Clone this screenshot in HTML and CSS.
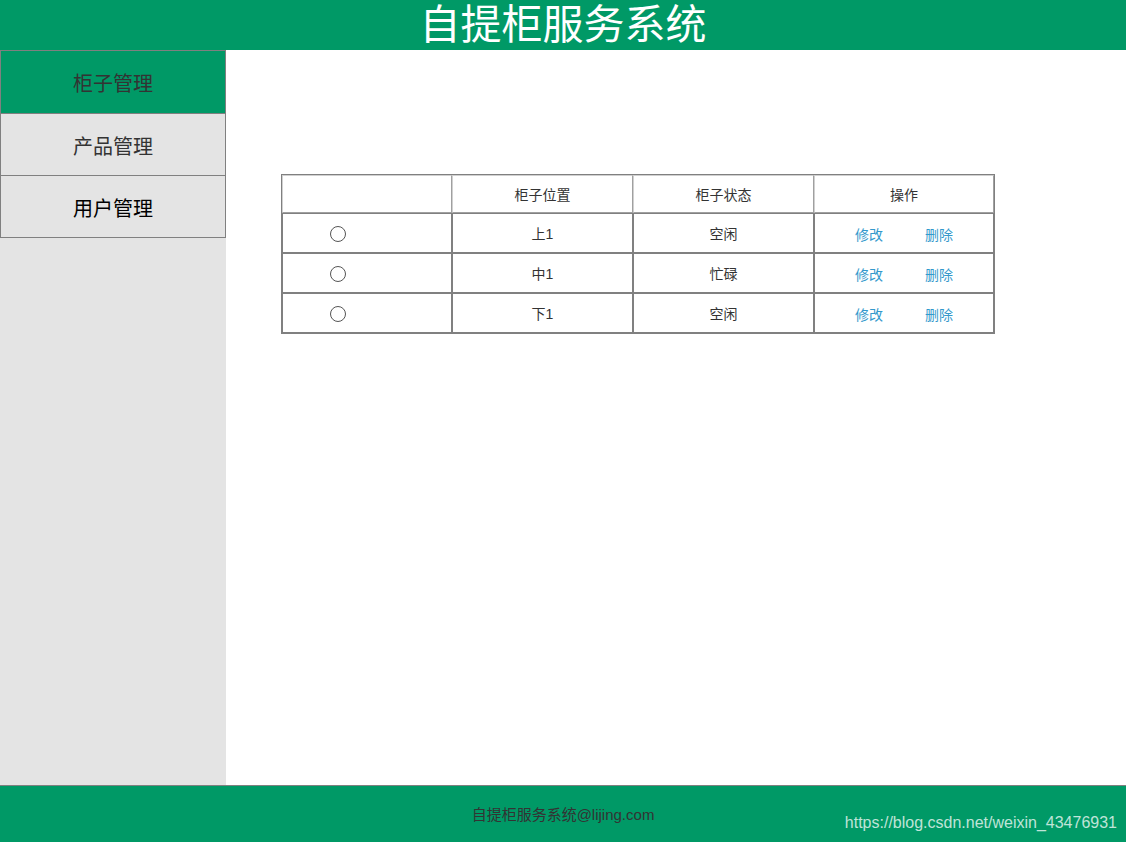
FILE: index.html
```html
<!DOCTYPE html>
<html>

<head>
    <title>自提柜服务系统</title>
    <link rel="stylesheet" href="styles.css">
</head>

<body>
    <div class="header">自提柜服务系统</div>
    <div class="main">
        <div class="sidebar">
            <div class="menu-item active">柜子管理</div>
            <div class="menu-item">产品管理</div>
            <div class="menu-item dark">用户管理</div>
        </div>
        <div class="content">
            <table class="cabinets">
                <tr class="head">
                    <td></td>
                    <td>柜子位置</td>
                    <td>柜子状态</td>
                    <td>操作</td>
                </tr>
                <tr>
                    <td class="pick"><span class="radio"></span></td>
                    <td>上1</td>
                    <td>空闲</td>
                    <td class="ops"><a href="#">修改</a><a href="#">删除</a></td>
                </tr>
                <tr>
                    <td class="pick"><span class="radio"></span></td>
                    <td>中1</td>
                    <td>忙碌</td>
                    <td class="ops"><a href="#">修改</a><a href="#">删除</a></td>
                </tr>
                <tr>
                    <td class="pick"><span class="radio"></span></td>
                    <td>下1</td>
                    <td>空闲</td>
                    <td class="ops"><a href="#">修改</a><a href="#">删除</a></td>
                </tr>
            </table>
        </div>
    </div>
    <div class="footer">
        <span class="copy">自提柜服务系统@lijing.com</span>
        <span class="watermark">https://blog.csdn.net/weixin_43476931</span>
    </div>
</body>

</html>
```

FILE: styles.css
```css
body {
    margin: 0;
    font-family: "Liberation Sans", "Noto Sans CJK SC", sans-serif;
    color: #333;
}

.header {
    height: 50px;
    background: #009966;
    color: white;
    font-size: 41px;
    line-height: 50px;
    text-align: center;
}

.main {
    display: flex;
    height: 735px;
}

.sidebar {
    width: 226px;
    background: #e4e4e4;
}

.menu-item {
    height: 61px;
    line-height: 66px;
    border: 1px solid #808080;
    border-bottom: none;
    text-align: center;
    font-size: 20px;
    color: #333;
}

.menu-item:last-child {
    border-bottom: 1px solid #808080;
}

.menu-item.active {
    background: #009966;
    height: 62px;
}

.menu-item.dark {
    color: #000;
}

.content {
    flex: 1;
    background: white;
    padding: 124px 0 0 55px;
}

.cabinets {
    border: 1px solid #808080;
    border-spacing: 0;
    font-size: 14px;
}

.cabinets td {
    border: 1px solid #808080;
    height: 38px;
    padding: 0;
    text-align: center;
    width: 179px;
}

.cabinets td:first-child {
    width: 121px;
}

.cabinets td:last-child {
    width: 178px;
}

.cabinets .head td {
    height: 36px;
    border-color: #a0a0a0;
    border-top-color: #d0d0d0;
    border-left-color: #d0d0d0;
}

.cabinets .pick {
    text-align: left;
    padding-left: 47px;
}

.radio {
    display: inline-block;
    width: 14px;
    height: 14px;
    border: 1px solid #555;
    border-radius: 50%;
    vertical-align: middle;
}

.ops a {
    display: inline-block;
    color: #3399cc;
    text-decoration: none;
    margin: 1px 21px 0;
}

.footer {
    height: 56px;
    border-top: 1px solid #808080;
    background: #009966;
    position: relative;
    text-align: center;
    font-size: 15px;
}

.copy {
    display: inline-block;
    margin-top: 17px;
    color: #333;
}

.watermark {
    position: absolute;
    right: 9px;
    top: 28px;
    font-size: 16px;
    color: rgba(255, 255, 255, 0.75);
}
```
